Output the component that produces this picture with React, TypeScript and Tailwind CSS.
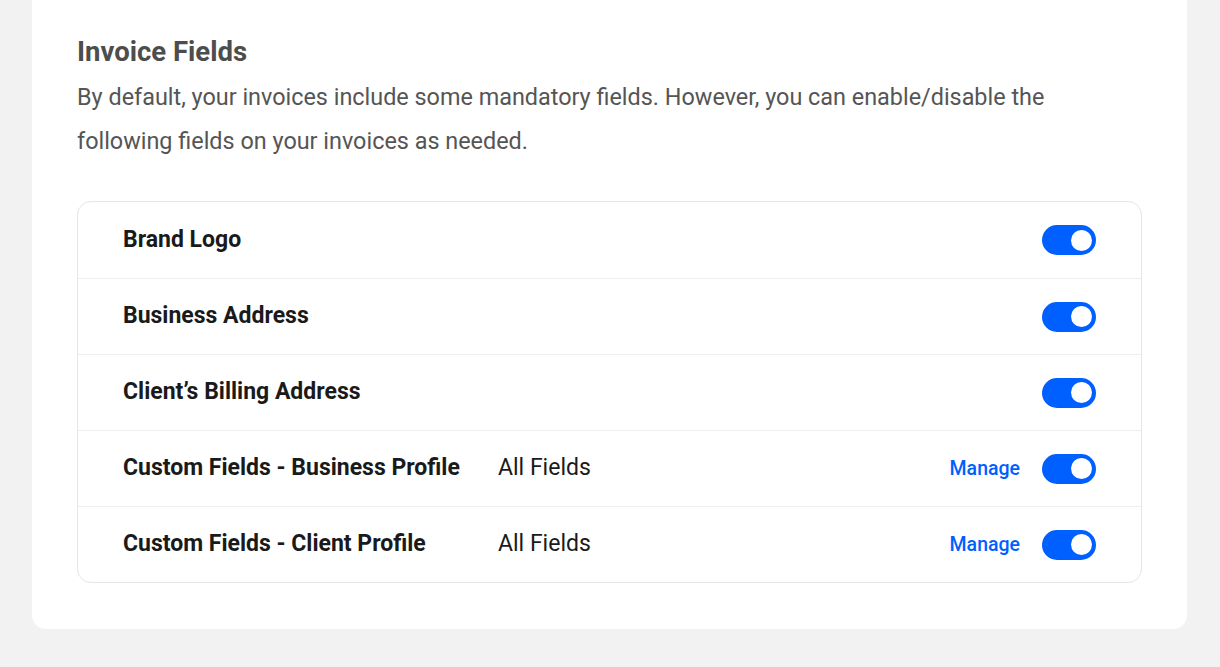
import { useState } from 'react';

const FIELDS = [
  { id: 'logo', label: 'Brand Logo' },
  { id: 'address', label: 'Business Address' },
  { id: 'billing', label: 'Client’s Billing Address' },
  { id: 'cfBusiness', label: 'Custom Fields - Business Profile', value: 'All Fields', manage: true },
  { id: 'cfClient', label: 'Custom Fields - Client Profile', value: 'All Fields', manage: true },
];

function Toggle({ on, onClick }: { on: boolean; onClick: () => void }) {
  return (
    <button
      onClick={onClick}
      className={`w-[54px] h-[30px] rounded-full flex items-center px-[4px] shrink-0 ${on ? 'bg-[#005fff] justify-end' : 'bg-[#d0d0d0] justify-start'}`}
    >
      <span className="w-[21px] h-[21px] rounded-full bg-white block" />
    </button>
  );
}

export default function App() {
  const [enabled, setEnabled] = useState<Record<string, boolean>>({
    logo: true, address: true, billing: true, cfBusiness: true, cfClient: true,
  });

  return (
    <div className="min-h-[667px] bg-[#f2f2f2] pl-[32px] pr-[33px] font-['Roboto',sans-serif]">
      <div className="bg-white rounded-b-[14px] pl-[45px] pr-[45px] pt-[35px] pb-[46px]">
        <h2 className="text-[27.5px] leading-[34px] font-bold text-[#4d4d4d]">Invoice Fields</h2>
        <p className="mt-[6px] text-[23.4px] leading-[44px] text-[#555555] max-w-[1000px]">
          By default, your invoices include some mandatory fields. However, you can enable/disable the following fields on your invoices as needed.
        </p>

        <div className="mt-[38px] border border-[#e6e6e6] rounded-[14px]">
          {FIELDS.map((f, i) => (
            <div
              key={f.id}
              className={`h-[76px] flex items-center pl-[45px] pr-[45px] ${i > 0 ? 'border-t border-[#eeeeee]' : ''}`}
            >
              <span className="w-[375px] text-[23px] font-bold text-[#1a1a1a]">{f.label}</span>
              {f.value && <span className="text-[23px] text-[#1a1a1a]">{f.value}</span>}
              <div className="ml-auto flex items-center gap-[22px]">
                {f.manage && (
                  <a href="#" className="text-[19.5px] font-medium text-[#005fff]">Manage</a>
                )}
                <Toggle on={enabled[f.id]} onClick={() => setEnabled({ ...enabled, [f.id]: !enabled[f.id] })} />
              </div>
            </div>
          ))}
        </div>
      </div>
    </div>
  );
}
